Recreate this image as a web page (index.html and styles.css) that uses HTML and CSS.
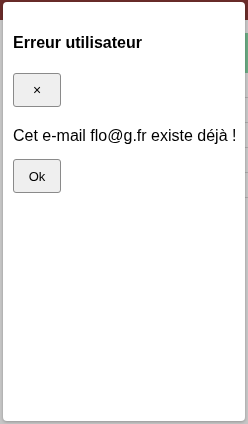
FILE: index.html
```html
<!DOCTYPE html>
<html lang="fr">
<head>
<meta charset="utf-8">
<link rel="stylesheet" href="styles.css">
</head>
<body>
<div class="page">
  <div class="topbar"></div>
  <div class="content">
    <div class="row"></div>
    <div class="row green"></div>
    <div class="row line"></div>
    <div class="row line"></div>
    <div class="row line"></div>
    <div class="row line"></div>
    <div class="row line"></div>
  </div>
</div>
<div class="dialog" role="dialog">
  <h2 class="title">Erreur utilisateur</h2>
  <button class="btn btn-close">×</button>
  <p class="message">Cet e-mail flo@g.fr existe déjà !</p>
  <button class="btn btn-ok">Ok</button>
</div>
</body>
</html>
```
FILE: styles.css
```css
html, body {
  margin: 0;
  padding: 0;
  height: 100%;
}
body {
  font-family: "Liberation Sans", Arial, sans-serif;
  background: #c6c6c6;
  overflow: hidden;
}
.page {
  display: flex;
  flex-direction: column;
  height: 100%;
}
.topbar {
  height: 20px;
  background: #6a2c2a;
}
.content {
  flex: 1;
  background: #c6c6c6;
  display: flex;
  flex-direction: column;
  gap: 24px;
  padding-top: 11px;
  padding-left: 120px;
}
.row { height: 1px; }
.green { height: 40px; background: #6aa882; margin-top: -23px; }
.line { height: 1px; background: #a8a8a8; }
.dialog {
  position: fixed;
  left: 3px;
  top: 2px;
  width: 242px;
  height: 419px;
  box-sizing: border-box;
  background: #ffffff;
  border-radius: 4px;
  box-shadow: 0 1px 3px rgba(0,0,0,0.25);
  padding: 0 10px;
  display: flex;
  flex-direction: column;
  align-items: flex-start;
}
.title {
  font-size: 16px;
  font-weight: bold;
  margin: 31px 0 0;
  line-height: 19px;
  color: #000;
}
.btn {
  font-family: "Liberation Sans", Arial, sans-serif;
  width: 48px;
  height: 34px;
  background: #efefef;
  border: 1px solid #8a8a8a;
  border-radius: 3px;
  color: #000;
  padding: 0;
  font-size: 13px;
}
.btn-close {
  margin-top: 21px;
  font-size: 14px;
}
.message {
  margin: 19px 0 0;
  font-size: 16px;
  line-height: 19px;
  white-space: nowrap;
  color: #000;
}
.btn-ok {
  margin-top: 14px;
}
```
